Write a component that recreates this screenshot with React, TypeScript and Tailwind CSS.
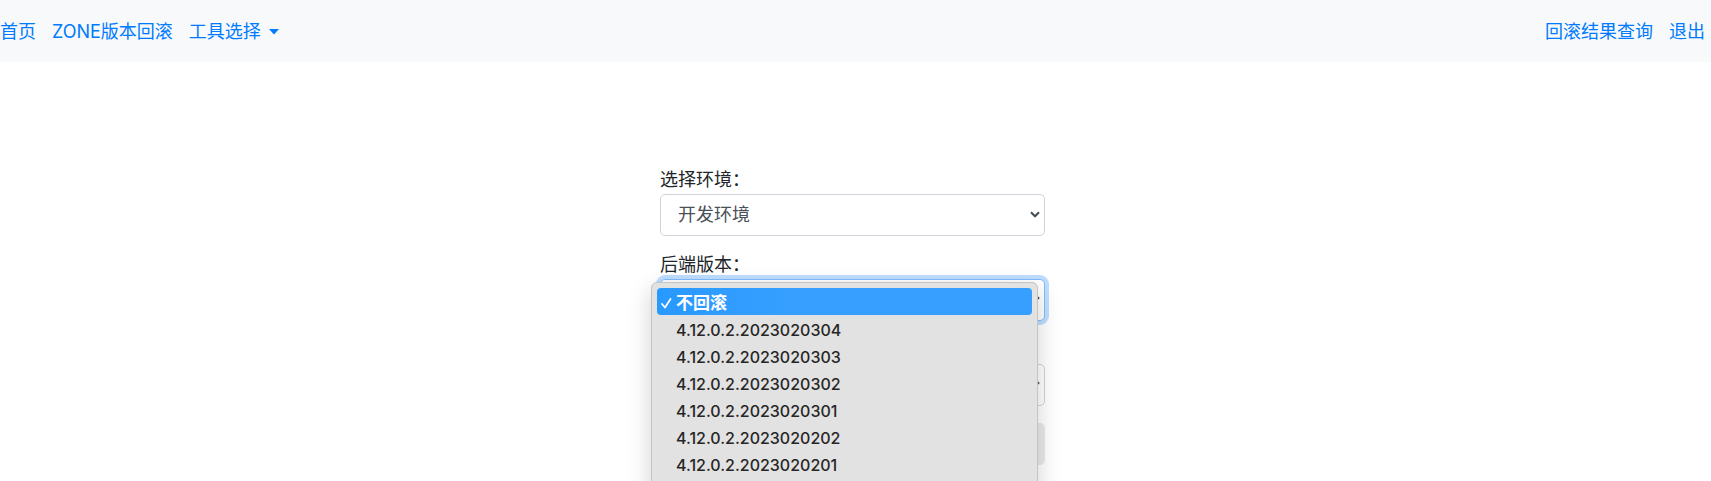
import { useState } from "react";
import type { ReactNode } from "react";

const versions = [
  "不回滚",
  "4.12.0.2.2023020304",
  "4.12.0.2.2023020303",
  "4.12.0.2.2023020302",
  "4.12.0.2.2023020301",
  "4.12.0.2.2023020202",
  "4.12.0.2.2023020201",
];

function NavLink({ children }: { children: ReactNode }) {
  return (
    <a href="#" className="text-[#007bff] hover:underline">
      {children}
    </a>
  );
}

function SelectBox({
  id,
  options,
  label,
  focused = false,
}: {
  id: string;
  options: string[];
  label?: string;
  focused?: boolean;
}) {
  return (
    <div className="relative">
      <select
        id={id}
        aria-label={label}
        className={
          "block h-[42px] w-full appearance-none rounded-[5px] border bg-white pr-8 pl-[17px] text-[#495057] outline-none " +
          (focused
            ? "border-[#80bdff] ring-4 ring-[#bfdeff]"
            : "border-[#ced4da]")
        }
      >
        {options.map((option) => (
          <option key={option}>{option}</option>
        ))}
      </select>
      <svg
        className="pointer-events-none absolute top-4 right-1 h-2.5 w-3"
        viewBox="0 0 12 10"
        fill="none"
        stroke="#495057"
        strokeWidth="2.2"
        aria-hidden="true"
      >
        <path d="M2 2.2 6 6.2 10 2.2" />
      </svg>
    </div>
  );
}

export default function App() {
  const [selected, setSelected] = useState(versions[0]);

  return (
    <div className="h-screen overflow-hidden bg-white font-['Inter','Noto_Sans_CJK_SC',sans-serif] text-[18px] leading-[26px] text-[#212529]">
      <nav className="flex items-center justify-between bg-[#f8f9fa] pt-[19px] pr-1.5 pb-[17px]">
        <div className="flex items-center gap-4">
          <NavLink>首页</NavLink>
          <NavLink>ZONE版本回滚</NavLink>
          <button type="button" className="flex items-center gap-2 text-[#007bff]">
            工具选择
            <svg className="h-[6px] w-[10px]" viewBox="0 0 10 6" fill="currentColor" aria-hidden="true">
              <path d="M0 0H10L5 5.4Z" />
            </svg>
          </button>
        </div>
        <div className="flex items-center gap-4">
          <NavLink>回滚结果查询</NavLink>
          <NavLink>退出</NavLink>
        </div>
      </nav>

      <main className="pt-[106px] pr-1.5">
        <form className="mx-auto flex w-full max-w-[385px] flex-col gap-[17px]">
          <div>
            <label htmlFor="env" className="block pb-0.5 leading-6">
              选择环境：
            </label>
            <SelectBox id="env" options={["开发环境"]} />
          </div>

          <div className="relative">
            <label htmlFor="backend" className="block pb-0.5 leading-6">
              后端版本：
            </label>
            <SelectBox id="backend" options={[selected]} focused />
            <ul
              role="listbox"
              aria-label="后端版本"
              className="absolute top-[29px] right-[7px] -left-[9px] z-10 rounded-md border border-[#c4c4c4] bg-[#e2e2e2] px-[5px] pt-[5px] pb-10 text-[16px] leading-6 shadow-[0_8px_24px_rgba(0,0,0,0.18)]"
            >
              {versions.map((version) => (
                <li
                  key={version}
                  role="option"
                  aria-selected={version === selected}
                  onClick={() => setSelected(version)}
                  className={
                    "flex h-[27px] items-center rounded pt-0.5 " +
                    (version === selected
                      ? "bg-linear-to-r from-[#2899ff] to-[#369fff] to-35% text-[17px] font-bold text-white"
                      : "font-medium text-[#262626]")
                  }
                >
                  <span className="flex w-[19px] shrink-0 pl-1">
                    {version === selected && (
                      <svg
                        className="h-3 w-3"
                        viewBox="0 0 12 12"
                        fill="none"
                        stroke="currentColor"
                        strokeWidth="1.8"
                        strokeLinecap="round"
                        strokeLinejoin="round"
                        aria-hidden="true"
                      >
                        <path d="M1 7 4 10.5 9.5 2" />
                      </svg>
                    )}
                  </span>
                  {version}
                </li>
              ))}
            </ul>
          </div>

          <div className="pt-[26px]">
            <SelectBox id="frontend" label="前端版本" options={["不回滚"]} />
          </div>

          <button type="submit" aria-label="提交" className="h-[42px] rounded-[5px] bg-[#e9e9e9]" />
        </form>
      </main>
    </div>
  );
}
